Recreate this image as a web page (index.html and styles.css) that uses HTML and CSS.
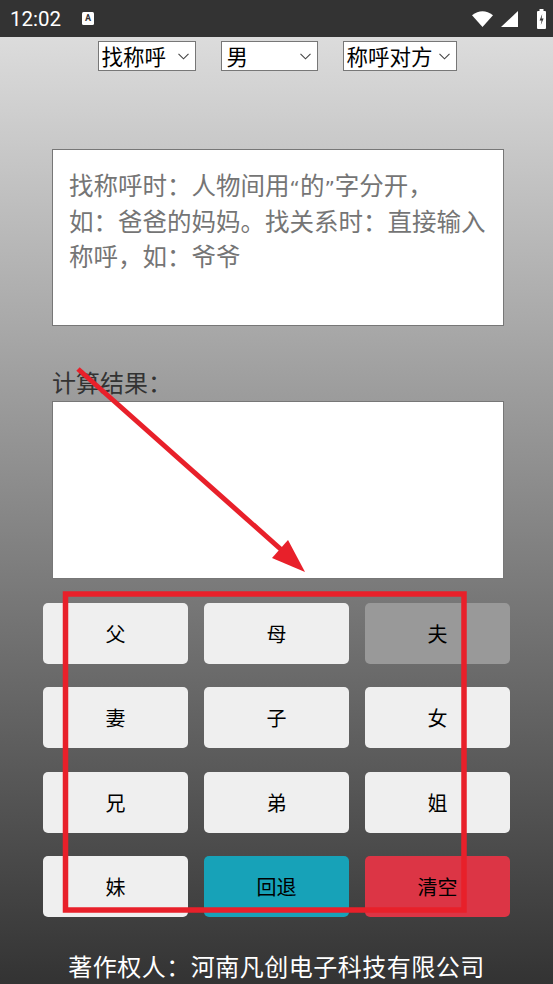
FILE: index.html
```html
<!DOCTYPE html>
<html lang="zh">
<head>
<meta charset="utf-8">
<title>亲戚称呼计算器</title>
<link rel="stylesheet" href="styles.css">
</head>
<body>
<div class="status">
  <div class="status-left">
    <span class="time">12:02</span>
    <span class="a-icon">A</span>
  </div>
  <div class="status-right">
    <svg class="wifi" width="21" height="16" viewBox="0 0 21 16"><path d="M0 4.2 Q10.5 -3.6 21 4.2 L10.5 16 Z" fill="#fff"/></svg>
    <svg class="signal" width="17" height="16" viewBox="0 0 17 16"><path d="M17 0 L17 16 L0 16 Z" fill="#fff"/></svg>
    <svg class="battery" width="9" height="20" viewBox="0 0 9 20"><rect x="2.5" y="0" width="4" height="2" fill="#fff"/><rect x="0" y="2" width="9" height="18" rx="1" fill="#fff"/><path d="M5.2 5 L2.6 11.4 L4.6 11.4 L3.8 16 L6.6 9.4 L4.6 9.4 Z" fill="#333"/></svg>
  </div>
</div>
<div class="app">
  <div class="selects">
    <div class="sel sel-1"><span>找称呼</span><svg class="chev" width="11" height="7" viewBox="0 0 11 7"><path d="M0.5 0.8 L5.5 5.8 L10.5 0.8" fill="none" stroke="#444" stroke-width="1.1"/></svg></div>
    <div class="sel sel-2"><span>男</span><svg class="chev" width="11" height="7" viewBox="0 0 11 7"><path d="M0.5 0.8 L5.5 5.8 L10.5 0.8" fill="none" stroke="#444" stroke-width="1.1"/></svg></div>
    <div class="sel sel-3"><span>称呼对方</span><svg class="chev" width="11" height="7" viewBox="0 0 11 7"><path d="M0.5 0.8 L5.5 5.8 L10.5 0.8" fill="none" stroke="#444" stroke-width="1.1"/></svg></div>
  </div>
  <div class="input-box">
    <div class="line">找称呼时：人物间用<span class="q">“</span>的<span class="q">”</span>字分开，</div>
    <div class="line">如：爸爸的妈妈。找关系时：直接输入</div>
    <div class="line">称呼，如：爷爷</div>
  </div>
  <div class="label">计算结果：</div>
  <div class="result-box"></div>
  <div class="keys">
    <div class="key">父</div>
    <div class="key">母</div>
    <div class="key key-gray">夫</div>
    <div class="key">妻</div>
    <div class="key">子</div>
    <div class="key">女</div>
    <div class="key">兄</div>
    <div class="key">弟</div>
    <div class="key">姐</div>
    <div class="key">妹</div>
    <div class="key key-info">回退</div>
    <div class="key key-danger">清空</div>
  </div>
  <div class="footer">著作权人：河南凡创电子科技有限公司</div>
</div>
<svg class="annot" width="553" height="984" viewBox="0 0 553 984">
  <line x1="78" y1="369" x2="285" y2="553" stroke="#e8202a" stroke-width="5"/>
  <polygon points="305,572 272,558 288,540" fill="#e8202a"/>
  <rect x="65.5" y="594" width="398.5" height="316" fill="none" stroke="#e8202a" stroke-width="5.5"/>
</svg>
</body>
</html>
```
FILE: styles.css
```css
html, body {
  margin: 0;
  padding: 0;
}
body {
  width: 553px;
  height: 984px;
  position: relative;
  overflow: hidden;
  font-family: "Noto Sans CJK SC", "Noto Sans", sans-serif;
}
.status {
  height: 37px;
  background: #333333;
  display: flex;
  align-items: center;
  justify-content: space-between;
  padding: 0 7px 0 10px;
  box-sizing: border-box;
}
.status-left {
  display: flex;
  align-items: center;
  gap: 21px;
}
.time {
  font-family: Roboto, "Noto Sans", sans-serif;
  color: #fff;
  font-size: 20.5px;
  line-height: 1;
  margin-top: 1px;
}
.a-icon {
  width: 12px;
  height: 13px;
  background: #fff;
  border-radius: 1.5px;
  color: #333;
  font-family: Roboto, sans-serif;
  font-weight: bold;
  font-size: 9px;
  line-height: 12px;
  text-align: center;
}
.status-right {
  display: flex;
  align-items: center;
  gap: 8px;
}
.battery {
  margin-left: 11px;
}
.app {
  height: 947px;
  background: linear-gradient(to bottom, #dcdcdc 0%, #333333 100%);
  display: flex;
  flex-direction: column;
}
.selects {
  display: flex;
  justify-content: center;
  gap: 25px;
  padding-top: 4px;
  padding-left: 1px;
}
.sel {
  height: 30px;
  box-sizing: border-box;
  border: 1.5px solid #777;
  background: #fff;
  display: flex;
  align-items: center;
  justify-content: space-between;
  padding: 0 6px 0 3px;
  font-size: 21.5px;
  color: #000;
}
.sel span {
  line-height: 1;
  margin-top: -1px;
}
.sel-1 { width: 98px; }
.sel-2 { width: 97px; padding-left: 5px; }
.sel-3 { width: 114px; }
.chev {
  margin-top: 1px;
}
.input-box {
  margin: 78px 0 0 52px;
  width: 452px;
  height: 179px;
  box-sizing: border-box;
  border: 1.5px solid #777;
  background: #fff;
  padding: 17px 0 0 16px;
  font-size: 24.5px;
  color: #757575;
  white-space: nowrap;
}
.line {
  height: 35.5px;
  line-height: 35.5px;
  overflow: visible;
}
.q {
  font-family: "DejaVu Sans", sans-serif;
  font-size: 20px;
  line-height: 0;
}
.label {
  margin: 38px 0 0 52px;
  font-size: 24px;
  line-height: 36px;
  color: #333;
}
.result-box {
  margin: 1px 0 0 52px;
  width: 452px;
  height: 179px;
  box-sizing: border-box;
  border: 1.5px solid #777;
  background: #fff;
}
.keys {
  margin: 24px 0 0 43px;
  display: grid;
  grid-template-columns: repeat(3, 145px);
  grid-auto-rows: 61px;
  column-gap: 16px;
  row-gap: 23.5px;
}
.key {
  background: #efefef;
  border-radius: 5px;
  display: flex;
  align-items: center;
  justify-content: center;
  font-size: 20px;
  color: #000;
}
.key-gray {
  background: #999999;
}
.key-info {
  background: #17a2b8;
}
.key-danger {
  background: #dc3545;
}
.footer {
  margin-top: 31px;
  text-align: center;
  color: #fff;
  font-size: 24px;
  letter-spacing: 0.5px;
  line-height: 36px;
}
.annot {
  position: absolute;
  left: 0;
  top: 0;
  pointer-events: none;
}
```
